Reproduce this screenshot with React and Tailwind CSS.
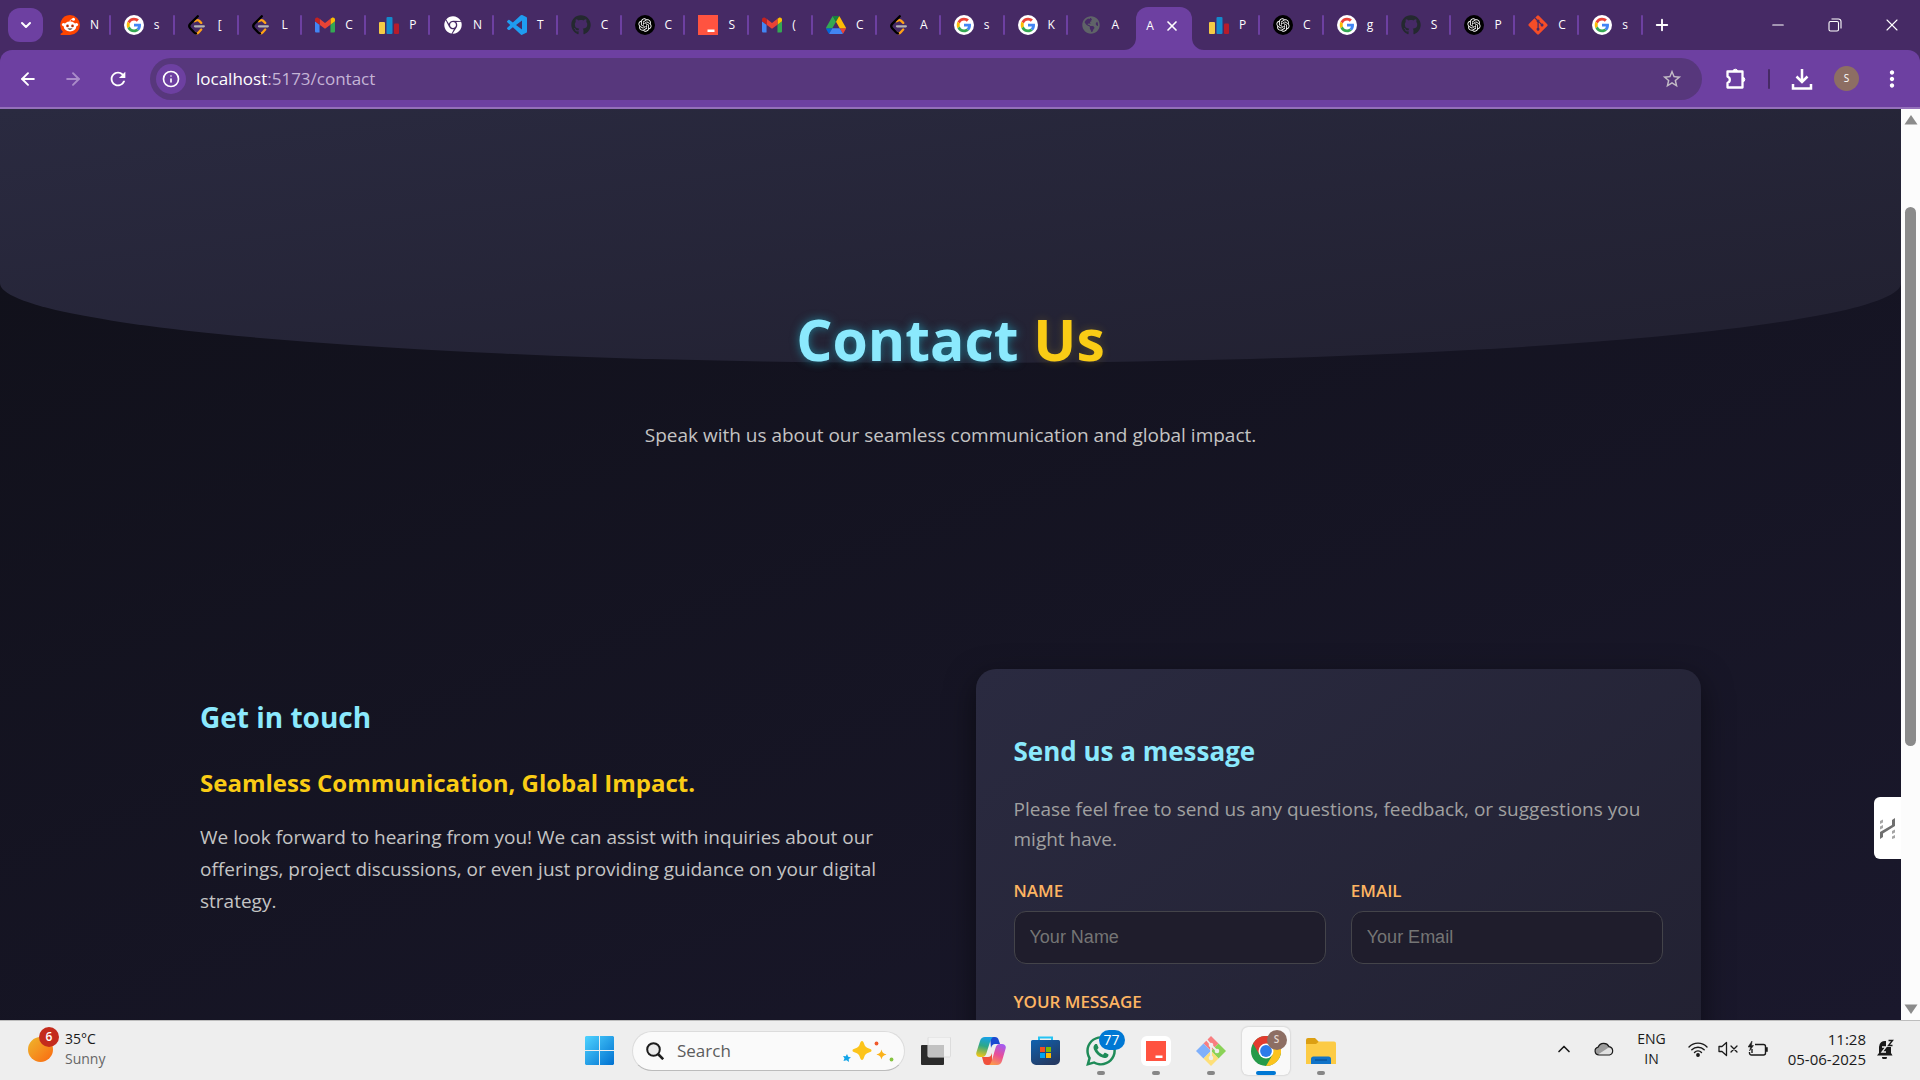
import React from "react";
import {
  ArrowLeft, ArrowRight, ChevronDown, ChevronUp, Info, Minus, Plus, X,
} from "lucide-react";
import { FaGithub, FaGitAlt, FaChrome, FaGlobeAmericas, FaWhatsapp } from "react-icons/fa";
import { RiOpenaiFill } from "react-icons/ri";
import { BiLogoVisualStudio } from "react-icons/bi";
import { MdRefresh, MdStarBorder, MdMoreVert } from "react-icons/md";

/* ---------- favicons ---------- */

function GoogleIcon() {
  return (
    <svg viewBox="0 0 48 48" className="size-5">
      <circle cx="24" cy="24" r="24" fill="#fff" />
      <g transform="translate(6.5 6.5) scale(0.73)">
        <path fill="#EA4335" d="M24 9.5c3.54 0 6.71 1.22 9.21 3.6l6.85-6.85C35.9 2.38 30.47 0 24 0 14.62 0 6.51 5.38 2.56 13.22l7.98 6.19C12.43 13.72 17.74 9.5 24 9.5z" />
        <path fill="#4285F4" d="M46.98 24.55c0-1.57-.15-3.09-.38-4.55H24v9.02h12.94c-.58 2.96-2.26 5.48-4.78 7.18l7.73 6c4.51-4.18 7.09-10.36 7.09-17.65z" />
        <path fill="#FBBC05" d="M10.53 28.59c-.48-1.45-.76-2.99-.76-4.59s.27-3.14.76-4.59l-7.98-6.19C.92 16.46 0 20.12 0 24c0 3.88.92 7.54 2.56 10.78l7.97-6.19z" />
        <path fill="#34A853" d="M24 48c6.48 0 11.93-2.13 15.89-5.81l-7.73-6c-2.15 1.45-4.92 2.3-8.16 2.3-6.26 0-11.57-4.22-13.47-9.91l-7.98 6.19C6.51 42.62 14.62 48 24 48z" />
      </g>
    </svg>
  );
}

function LeetIcon() {
  return (
    <svg viewBox="0 0 20 20" fill="none" strokeLinecap="round" strokeLinejoin="round" strokeWidth="2.3" className="size-5">
      <path stroke="#FFA116" d="M6.500 6.300 8.800 5.200C9.800 4.800 10.500 5.200 11.200 5.900L13.200 7.900M13.200 14.500 10.800 17.200C9.800 18.300 8.500 18.500 7.500 18" />
      <path stroke="#000" d="M9.800 1.200 2.200 8.900C1 10.200 1 11.900 2.200 13.200L6 17.300C6.600 17.900 7.200 18.300 8 18.400" />
      <path stroke="#B3B3B3" d="M7 11.300h8.800" />
    </svg>
  );
}

function GmailIcon() {
  return (
    <svg viewBox="52 38 88 74" className="size-5">
      <path fill="#4285f4" d="M58 108h14V74L52 59v43c0 3.320 2.690 6 6 6" />
      <path fill="#34a853" d="M120 108h14c3.320 0 6-2.690 6-6V59l-20 15" />
      <path fill="#fbbc04" d="M120 48v26l20-15v-8c0-7.420-8.470-11.650-14.400-7.200" />
      <path fill="#ea4335" d="M72 74V48l24 18 24-18v26L96 92" />
      <path fill="#c5221f" d="M52 51v8l20 15V48l-5.600-4.200c-5.940-4.450-14.400-.22-14.400 7.200" />
    </svg>
  );
}

function DriveIcon() {
  return (
    <svg viewBox="0 0 87.3 78" className="size-5">
      <path d="m6.6 66.85 3.85 6.65c.8 1.4 1.95 2.5 3.3 3.3l13.75-23.8h-27.5c0 1.55.4 3.1 1.2 4.5z" fill="#0066da" />
      <path d="m43.65 25-13.75-23.8c-1.35.8-2.5 1.9-3.3 3.3l-25.4 44a9.06 9.06 0 0 0 -1.2 4.5h27.5z" fill="#34a853" />
      <path d="m73.55 76.8c1.35-.8 2.5-1.9 3.3-3.3l1.6-2.75 7.65-13.25c.8-1.4 1.2-2.95 1.2-4.5h-27.502l5.852 11.5z" fill="#ea4335" />
      <path d="m43.65 25 13.75-23.8c-1.35-.8-2.9-1.2-4.5-1.2h-18.5c-1.6 0-3.15.45-4.5 1.2z" fill="#188038" />
      <path d="m59.8 53h-32.3l-13.75 23.8c1.35.8 2.9 1.2 4.5 1.2h50.8c1.6 0 3.15-.45 4.5-1.2z" fill="#4285f4" />
      <path d="m73.4 26.5-12.7-22c-.8-1.4-1.95-2.5-3.3-3.3l-13.75 23.8 16.15 28h27.45c0-1.55-.4-3.1-1.2-4.5z" fill="#fbbc04" />
    </svg>
  );
}

function BarsIcon() {
  return (
    <svg viewBox="0 0 20 20" className="size-5">
      <rect x="0" y="7" width="6" height="12" rx="1" fill="#F5CB45" />
      <rect x="7.500" y="2" width="6" height="17" rx="1" fill="#148ACC" />
      <rect x="15" y="8.500" width="5" height="10.500" rx="1" fill="#B71C2B" />
    </svg>
  );
}

function RedSquareIcon() {
  return (
    <svg viewBox="0 0 20 20" className="size-5">
      <rect width="20" height="20" fill="#FF5340" />
      <rect x="9.500" y="14.500" width="7" height="2.500" fill="#fff" />
    </svg>
  );
}

function RedditIcon() {
  return (
    <svg viewBox="0 0 20 20" className="size-5">
      <path d="M10 0a10 10 0 1 1 0 20H1.200c-.7 0-1-.8-.5-1.200L3 16.900A10 10 0 0 1 10 0z" fill="#FF4500" />
      <circle cx="3.600" cy="9.600" r="1.700" fill="#fff" />
      <circle cx="16.400" cy="9.600" r="1.700" fill="#fff" />
      <ellipse cx="10" cy="11.500" rx="6.300" ry="4.900" fill="#fff" />
      <circle cx="13.500" cy="4.200" r="1.500" fill="#fff" />
      <path d="M10 6.800c0-1.800 1.200-2.600 2.600-2.600" fill="none" stroke="#fff" strokeWidth=".9" />
      <circle cx="7.500" cy="10.900" r="1.300" fill="#B52A00" />
      <circle cx="12.500" cy="10.900" r="1.300" fill="#B52A00" />
      <path d="M7.600 13.600h4.800c-.5 1.500-4.300 1.500-4.800 0z" fill="#222" />
    </svg>
  );
}

function OpenAiIcon() {
  return (
    <span className="flex size-5 items-center justify-center rounded-full bg-black">
      <RiOpenaiFill className="size-4 text-white" />
    </span>
  );
}

const favicons = {
  reddit: <RedditIcon />,
  google: <GoogleIcon />,
  leet: <LeetIcon />,
  gmail: <GmailIcon />,
  bars: <BarsIcon />,
  chrome: <FaChrome className="size-[18px] text-white" />,
  code: <BiLogoVisualStudio className="size-6 shrink-0 text-[#1f9cf0]" />,
  github: <FaGithub className="size-5 text-[#24292f]" />,
  openai: <OpenAiIcon />,
  red: <RedSquareIcon />,
  drive: <DriveIcon />,
  globe: <FaGlobeAmericas className="size-[18px] text-[#5f6368]" />,
  git: <FaGitAlt className="size-[22px] shrink-0 text-[#F64D27]" />,
};

const tabs = [
  ["reddit", "N"], ["google", "s"], ["leet", "["], ["leet", "L"], ["gmail", "C"],
  ["bars", "P"], ["chrome", "N"], ["code", "T"], ["github", "C"], ["openai", "C"],
  ["red", "S"], ["gmail", "("], ["drive", "C"], ["leet", "A"], ["google", "s"],
  ["google", "K"], ["globe", "A"], ["active", "A"], ["bars", "P"], ["openai", "C"],
  ["google", "g"], ["github", "S"], ["openai", "P"], ["git", "C"], ["google", "s"],
];

function ActiveTab({ label }) {
  return (
    <div className="relative min-w-0 self-end">
      <svg viewBox="0 0 12 12" className="absolute bottom-0 -left-2 size-3 text-[#6d40a1]">
        <path d="M12 0v12H0A12 12 0 0 0 12 0z" fill="currentColor" />
      </svg>
      <svg viewBox="0 0 12 12" className="absolute -right-2 bottom-0 size-3 text-[#6d40a1]">
        <path d="M0 0v12h12A12 12 0 0 1 0 0z" fill="currentColor" />
      </svg>
      <div className="mx-1 flex h-[43px] items-center gap-2.5 rounded-t-xl bg-[#6d40a1] pb-1.5 pl-2.5">
        <button>{label}</button>
        <button aria-label="Close tab">
          <X className="size-4" strokeWidth={2.5} />
        </button>
      </div>
    </div>
  );
}

function Tab({ icon, label, divided }) {
  return (
    <button className="relative flex h-10 min-w-0 items-center gap-2.5 pl-[13px]">
      <span className="flex size-5 shrink-0 items-center justify-center">{favicons[icon]}</span>
      <span>{label}</span>
      {divided && <span className="absolute right-0 h-5 w-0.5 rounded bg-[#6d40a1]" />}
    </button>
  );
}

function TabStrip() {
  return (
    <div className="flex h-[50px] shrink-0 items-center bg-[#462a65] text-xs text-white">
      <button aria-label="Search tabs" className="mr-1 ml-2 flex h-[34px] w-[35px] shrink-0 items-center justify-center rounded-xl bg-[#6d40a1]">
        <ChevronDown className="size-4" strokeWidth={3} />
      </button>
      <div className="grid h-full max-w-[1596px] min-w-0 flex-1 grid-cols-[repeat(25,minmax(0,1fr))] items-center">
        {tabs.map(([icon, label], i) =>
          icon === "active" ? (
            <ActiveTab key={i} label={label} />
          ) : (
            <Tab key={i} icon={icon} label={label} divided={i !== 16} />
          )
        )}
      </div>
      <button aria-label="New tab" className="ml-2.5">
        <Plus className="size-[18px]" strokeWidth={2.5} />
      </button>
      <div className="ml-auto flex shrink-0 items-center">
        <button aria-label="Minimize" className="flex w-[57px] justify-center">
          <Minus className="size-[18px]" strokeWidth={1.5} />
        </button>
        <button aria-label="Restore" className="flex w-[57px] justify-center">
          <svg viewBox="0 0 14 14" fill="none" stroke="currentColor" strokeWidth="1.100" className="size-3.5">
            <rect x="1" y="3.500" width="9.500" height="9.500" rx="1.500" />
            <path d="M3.500 1h7a2.500 2.500 0 0 1 2.500 2.500v7" />
          </svg>
        </button>
        <button aria-label="Close window" className="flex w-[57px] justify-center">
          <X className="size-5" strokeWidth={1.3} />
        </button>
      </div>
    </div>
  );
}

function Toolbar() {
  return (
    <div className="shrink-0 bg-[#462a65]">
      <div className="flex h-[59px] items-center rounded-t-xl border-b-2 border-[#9470ba] bg-[#6d40a1] pr-[15px] pl-[5px] text-white">
        <button aria-label="Back" className="flex w-[45px] justify-center">
          <ArrowLeft className="size-5" strokeWidth={2.3} />
        </button>
        <button aria-label="Forward" className="flex w-[45px] justify-center text-[#aa8cc9]">
          <ArrowRight className="size-5" strokeWidth={2.3} />
        </button>
        <button aria-label="Reload" className="flex w-[45px] justify-center">
          <MdRefresh className="size-[22px]" />
        </button>
        <div className="ml-2.5 flex h-[42px] min-w-0 flex-1 items-center rounded-full bg-[#57377c] pl-1.5">
          <button aria-label="View site information" className="flex size-[30px] items-center justify-center rounded-full bg-[#6d40a1]">
            <Info className="size-[18px]" strokeWidth={2.2} />
          </button>
          <a href="#contact" className="ml-2.5 text-[17px] text-[#c5b4d6]">
            <span className="text-white">localhost</span>:5173/contact
          </a>
          <button aria-label="Bookmark" className="mr-[19px] ml-auto text-[#c3bcc6]">
            <MdStarBorder className="size-[22px]" />
          </button>
        </div>
        <button aria-label="Extensions" className="ml-[22px]">
          <svg viewBox="0 0 24 24" fill="none" stroke="currentColor" strokeWidth="2.300" strokeLinejoin="round" className="size-6">
            <path d="M3.500 4.500h15v16h-15v-4.600a3.300 3.300 0 0 0 0-6.300z" />
            <path d="M9 4.500a2.300 2.300 0 0 1 4.600 0zM18.500 10.200a2.300 2.300 0 0 1 0 4.600z" fill="currentColor" strokeWidth="1" />
          </svg>
        </button>
        <span className="mx-5 h-5 w-0.5 rounded bg-[#462a65]" />
        <button aria-label="Downloads">
          <svg viewBox="0 0 24 24" fill="none" stroke="currentColor" strokeWidth="2.500" className="size-6">
            <path d="M12 2v12M6.500 9.500 12 15l5.500-5.500M3 17v4.500h18V17" />
          </svg>
        </button>
        <button aria-label="Profile" className="ml-5 flex size-[25px] items-center justify-center rounded-full bg-[#8d6e63] text-[10px]">
          S
        </button>
        <button aria-label="Menu" className="ml-5">
          <MdMoreVert className="size-[26px]" />
        </button>
      </div>
    </div>
  );
}

/* ---------- page ---------- */

function Field({ id, label, placeholder }) {
  return (
    <div className="min-w-0">
      <label htmlFor={id} className="block text-[17px] leading-6 font-semibold text-[#fdb462] uppercase">{label}</label>
      <input
        id={id}
        placeholder={placeholder}
        className="mt-2 h-[53px] w-full rounded-xl border border-[#44444a] bg-[#1f1d2c] px-[15px] font-['Liberation_Sans',sans-serif] text-lg text-white placeholder:text-[#757575]"
      />
    </div>
  );
}

function ContactPage() {
  return (
    <main id="contact" className="relative min-w-0 flex-1 overflow-hidden bg-linear-160 from-[#101019] to-[#1a182c]">
      <div className="absolute inset-x-0 top-0 h-[254px] rounded-b-[50%_80px] bg-linear-to-br from-[#2a2a40] to-[#212030]" />
      <header className="relative flex flex-col items-center pt-[186px]">
        <h1 className="text-[57px] leading-[88px] font-bold text-[#8be9fd] [text-shadow:0_0_10px_#22b8cf99]">
          Contact <span className="text-[#facc15] [text-shadow:0_0_10px_#facc1533]">Us</span>
        </h1>
        <p className="mt-[36px] text-[19px] leading-8 text-[#c4c4c4]">
          Speak with us about our seamless communication and global impact.
        </p>
      </header>
      <section className="relative mx-auto mt-[218px] grid max-w-[1501px] grid-cols-2 items-start gap-[50px]">
        <div className="min-w-0 pt-[28px]">
          <h2 className="text-[28px] leading-10 font-bold text-[#8be9fd]">Get in touch</h2>
          <h3 className="mt-[30px] text-[24px] leading-8 font-bold text-[#facc15]">Seamless Communication, Global Impact.</h3>
          <p className="mt-[22px] text-[19px] leading-8 text-[#c4c4c4]">
            We look forward to hearing from you! We can assist with inquiries about our offerings, project discussions, or even just providing guidance on your digital strategy.
          </p>
        </div>
        <form className="min-w-0 rounded-[20px] bg-linear-to-br from-[#2a2a40] to-[#212030] p-[38px] shadow-[0_10px_30px_#00000080]" onSubmit={(e) => e.preventDefault()}>
          <h2 className="mt-[24px] text-[26px] leading-10 font-bold text-[#8be9fd]">Send us a message</h2>
          <p className="mt-[23px] text-[19px] leading-[30px] text-[#a0a0a0]">
            Please feel free to send us any questions, feedback, or suggestions you might have.
          </p>
          <div className="mt-[25px] grid grid-cols-2 gap-[25px]">
            <Field id="name" label="Name" placeholder="Your Name" />
            <Field id="email" label="Email" placeholder="Your Email" />
          </div>
          <div className="mt-[26px]">
            <label htmlFor="message" className="block text-[17px] leading-6 font-semibold text-[#fdb462] uppercase">Your message</label>
            <textarea id="message" rows={5} className="mt-2 w-full rounded-xl border border-[#44444a] bg-[#1f1d2c]" />
          </div>
        </form>
      </section>
      <button aria-label="Open assistant" className="absolute right-0 bottom-[161px] flex h-[62px] w-[27px] items-center justify-center rounded-l-md bg-white">
        <svg viewBox="0 0 15 21" className="h-[21px] w-[15px]">
          <path d="M0 21v-7L12 7V2l3-2v8L3 15.500V19z" fill="#6f6f6f" />
          <path d="M0 3l3-1.500v3L0 6zM0 8.500 3 7v3L0 11.500zM12 13l3-1.500v3L12 16zM12 18.500 15 17v3L12 21z" fill="#a5a5a5" />
        </svg>
      </button>
    </main>
  );
}

function Scrollbar() {
  return (
    <div className="flex w-[19px] shrink-0 flex-col items-center bg-[#fcfcfc] py-1.5">
      <svg viewBox="0 0 14 10" className="h-2.5 w-3.5"><path d="M7 0l6.500 9.500H.5z" fill="#8b8b8b" /></svg>
      <div className="mt-[82px] w-[11px] grow-[539] rounded-full bg-[#8b8b8b]" />
      <div className="grow-[258]" />
      <svg viewBox="0 0 14 10" className="h-2.5 w-3.5"><path d="M7 10 .5.500h13z" fill="#8b8b8b" /></svg>
    </div>
  );
}

/* ---------- taskbar ---------- */

function TaskButton({ label, running, active, children }) {
  return (
    <div className="flex w-[55px] justify-center">
      <button
        aria-label={label}
        className={active
          ? "relative flex h-12 w-12 items-center justify-center rounded-md bg-[#f9f9f9] shadow-[0_0_2px_#00000040]"
          : "relative flex h-12 w-12 items-center justify-center"}
      >
        {children}
        {running && !active && <span className="absolute bottom-0 h-1 w-2 rounded-full bg-[#868686]" />}
        {active && <span className="absolute bottom-0 h-1 w-5 rounded-full bg-[#0078d4]" />}
      </button>
    </div>
  );
}

function WindowsIcon() {
  return (
    <svg viewBox="0 0 29 29" className="size-[29px]">
      <defs>
        <linearGradient id="win" x1="0" y1="0" x2="1" y2="1">
          <stop offset="0" stopColor="#4fd3ff" />
          <stop offset="1" stopColor="#0070d0" />
        </linearGradient>
      </defs>
      <path fill="url(#win)" d="M1 0h13v14H0V1zM15 0h13l1 1v13H15zM0 15h14v14H1l-1-1zM15 15h14v13l-1 1H15z" />
    </svg>
  );
}

function SparkIcon() {
  return (
    <svg viewBox="0 0 52 24" className="h-6 w-[52px]">
      <path d="M20 2c1 0 1.500 1 2 2.500 1 3 2 4 5 5 1.500.5 2.500 1 2.500 2s-1 1.500-2.500 2c-3 1-4 2-5 5-.5 1.500-1 2.500-2 2.500s-1.500-1-2-2.500c-1-3-2-4-5-5-1.500-.5-2.500-1-2.500-2s1-1.500 2.500-2c3-1 4-2 5-5 .5-1.500 1-2.500 2-2.500z" fill="#fcc41b" />
      <path d="M39.500 10.500c.8 3 1.800 4 5 5-3.200 1-4.200 2-5 5-.8-3-1.800-4-5-5 3.200-1 4.200-2 5-5z" fill="#fbb21b" />
      <path d="M5 15l1.200 2.800 2.800.7-2.300 1.500.3 3-2.500-1.700L1.500 22l1-2.800L1 17l2.800.3z" fill="#12a4e8" />
      <circle cx="34.500" cy="4.500" r="1.900" fill="#f0592b" />
      <circle cx="49.500" cy="20.500" r="1.900" fill="#86c440" />
    </svg>
  );
}

function TaskViewIcon() {
  return (
    <svg viewBox="0 0 30 28" className="h-7 w-[30px]">
      <rect x="0" y="8" width="23" height="20" rx="1" fill="#2b2b2b" />
      <rect x="7" y="0" width="22.500" height="20" rx="1" fill="#f3f3f3" stroke="#dcdcdc" />
      <path d="M7 8h16v12H7z" fill="#c2c2c2" />
    </svg>
  );
}

function CopilotIcon() {
  return (
    <svg viewBox="0 0 30 28" className="h-7 w-[30px]">
      <defs>
        <linearGradient id="cpA" x1=".5" y1="0" x2=".3" y2="1">
          <stop offset="0" stopColor="#17a1e6" />
          <stop offset=".45" stopColor="#2ea887" />
          <stop offset="1" stopColor="#f3c614" />
        </linearGradient>
        <linearGradient id="cpB" x1=".7" y1="0" x2=".3" y2="1">
          <stop offset="0" stopColor="#a45bf0" />
          <stop offset=".5" stopColor="#ea4e96" />
          <stop offset="1" stopColor="#fb9a4b" />
        </linearGradient>
      </defs>
      <path d="M14 0h5c2 0 3 1 3.500 2.500L24 7h-5c-2 0-3 1-4 4z" fill="#1b49d1" />
      <path d="M16 28h-5c-2 0-3-1-3.500-2.500L6 20h6c2 0 3-1 4-4z" fill="#f0503c" />
      <path d="M9 0h9c-2 0-3 2-4 5l-3.500 11c-.8 2.500-2 4-4.500 4H4c-3 0-4.500-2-3.500-5L4 4c.8-2.500 2.500-4 5-4z" fill="url(#cpA)" />
      <path d="M21 28h-9c2 0 3-2 4-5l3.500-12c.8-2.500 2-4 4.500-4h2c3 0 4.500 2 3.500 5L26 24c-.8 2.500-2.500 4-5 4z" fill="url(#cpB)" />
    </svg>
  );
}

function StoreIcon() {
  return (
    <svg viewBox="0 0 29 29" className="size-[29px]">
      <defs>
        <linearGradient id="store" x1="0" y1="0" x2=".6" y2="1">
          <stop offset="0" stopColor="#0f62b0" />
          <stop offset="1" stopColor="#243a63" />
        </linearGradient>
      </defs>
      <path d="M8 5V1.500h13V5" fill="none" stroke="#25c3f3" strokeWidth="2" />
      <path d="M0 5.500A1.500 1.500 0 0 1 1.500 4h26A1.500 1.500 0 0 1 29 5.500V24a5 5 0 0 1-5 5H5a5 5 0 0 1-5-5z" fill="url(#store)" />
      <path d="M9 11h5v5H9z" fill="#f25022" />
      <path d="M15 11h5v5h-5z" fill="#7fba00" />
      <path d="M9 17h5v5H9z" fill="#00a4ef" />
      <path d="M15 17h5v5h-5z" fill="#ffb900" />
    </svg>
  );
}

function GitColorIcon() {
  return (
    <svg viewBox="0 0 30 30" className="size-[30px]">
      <path d="M15 0l7.500 7.500L15 15 7.500 7.500z" fill="#f87e80" />
      <path d="M7.500 7.500 15 15l-7.500 7.500L0 15z" fill="#7fb0fb" />
      <path d="M22.500 7.500 30 15l-7.500 7.500L15 15z" fill="#8ad257" />
      <path d="M15 15l7.500 7.500L15 30l-7.500-7.500z" fill="#fddf79" />
      <path d="M10 3l5 6v13M15 9l6 6" fill="none" stroke="#eee" strokeWidth="1.800" />
      <circle cx="15" cy="9" r="2.300" fill="#eee" />
      <circle cx="21" cy="15" r="2.300" fill="#eee" />
      <circle cx="15" cy="22" r="2.300" fill="#eee" />
    </svg>
  );
}

function ChromeColorIcon() {
  return (
    <svg viewBox="0 0 30 30" className="size-[30px]">
      <circle cx="15" cy="15" r="15" fill="#269a49" />
      <path d="M15 30A15 15 0 0 0 28 7.500H15l6.500 11.300z" fill="#fcc31e" />
      <path d="M2 7.500A15 15 0 0 1 28 7.500H15L8.500 18.700z" fill="#e33b2e" />
      <circle cx="15" cy="15" r="7.500" fill="#fff" />
      <circle cx="15" cy="15" r="5.900" fill="#2d7bea" />
    </svg>
  );
}

function FolderIcon() {
  return (
    <svg viewBox="0 0 30 26" className="h-[26px] w-[30px]">
      <path d="M0 2a2 2 0 0 1 2-2h7l4 4v4H0z" fill="#dc9f12" />
      <path d="M0 6h10l3-2.500h15a2 2 0 0 1 2 2V26H0z" fill="#fccb45" />
      <path d="M5 26v-5a2.500 2.500 0 0 1 2.500-2.500h15A2.500 2.500 0 0 1 25 21v5z" fill="#1073c8" />
      <path d="M9 22h12" stroke="#0b4f92" strokeWidth="1.200" />
    </svg>
  );
}

function Taskbar() {
  return (
    <footer className="grid h-[60px] shrink-0 grid-cols-[1fr_auto_1fr] items-center border-t border-[#bdbdbd] bg-[#eeeeee] text-[#1a1a1a]">
      <button className="flex items-center justify-self-start pb-[3px] pl-7 text-left text-sm leading-5">
        <span className="relative mr-3 size-[25px] rounded-full bg-linear-to-br from-[#ecb62c] to-[#f9650f]">
          <span className="absolute -top-2.5 left-[11px] flex size-5 items-center justify-center rounded-full bg-[#c42b1c] text-xs font-semibold text-white">6</span>
        </span>
        <span>
          <span className="block">35°C</span>
          <span className="block text-[#666]">Sunny</span>
        </span>
      </button>
      <div className="flex items-center">
        <TaskButton label="Start"><WindowsIcon /></TaskButton>
        <div className="mr-[3px] ml-[5px] flex h-10 w-[273px] items-center rounded-full border border-[#dcdcdc] border-b-[#bcbcbc] bg-[#fafafa] pr-2.5 pl-[13px]">
          <svg viewBox="0 0 18 18" fill="none" stroke="#1d1d1d" strokeWidth="2" className="size-[18px] shrink-0">
            <circle cx="7.500" cy="7.500" r="6.300" fill="#ececec" />
            <path d="M12 12l5.200 5.200" strokeWidth="2.600" />
          </svg>
          <input aria-label="Search" placeholder="Search" className="ml-[13px] min-w-0 flex-1 bg-transparent text-[17px] placeholder:text-[#5c5c5c]" />
          <SparkIcon />
        </div>
        <TaskButton label="Task view"><TaskViewIcon /></TaskButton>
        <TaskButton label="Copilot"><CopilotIcon /></TaskButton>
        <TaskButton label="Microsoft Store"><StoreIcon /></TaskButton>
        <TaskButton label="WhatsApp" running>
          <FaWhatsapp className="size-[34px] shrink-0 text-[#1f8b58]" />
          <span className="absolute top-[3px] left-[22px] flex h-5 w-[26px] items-center justify-center rounded-full bg-[#0078d4] text-sm text-white">77</span>
        </TaskButton>
        <TaskButton label="Recorder" running>
          <span className="flex size-[30px] items-center justify-center rounded-md bg-white">
            <RedSquareIcon />
          </span>
        </TaskButton>
        <TaskButton label="Git" running><GitColorIcon /></TaskButton>
        <TaskButton label="Chrome" running active>
          <ChromeColorIcon />
          <span className="absolute top-[3px] left-[25px] flex size-5 items-center justify-center rounded-full bg-[#8d6e63] text-[10px] font-semibold text-[#e4d8d2]">S</span>
        </TaskButton>
        <TaskButton label="File Explorer" running><FolderIcon /></TaskButton>
      </div>
      <div className="flex items-center justify-self-end pr-[26px] pb-[3px] text-[15px] leading-5">
        <button aria-label="Show hidden icons"><ChevronUp className="size-5" strokeWidth={2} /></button>
        <button aria-label="OneDrive" className="ml-5">
          <svg viewBox="0 0 20 14" className="h-3.5 w-5">
            <path d="M5 13a4 4 0 0 1-.8-7.900A6 6 0 0 1 15 4.600 4.300 4.300 0 0 1 15.500 13z" fill="#9c9c9c" />
            <path d="M4 12.500 15.500 5l3.500 4-3 4H5z" fill="#e1e1e1" />
            <path d="M5 13a4 4 0 0 1-.8-7.900A6 6 0 0 1 15 4.600 4.300 4.300 0 0 1 15.500 13z" fill="none" stroke="#1a1a1a" strokeWidth="1.200" />
          </svg>
        </button>
        <button className="ml-[23px] text-center text-sm leading-5"><span className="block">ENG</span><span className="block">IN</span></button>
        <button aria-label="Network, sound and battery" className="ml-[22px] flex items-center gap-2.5">
          <svg viewBox="0 0 20 16" fill="none" stroke="currentColor" strokeWidth="1.400" strokeLinecap="round" className="h-4 w-5">
            <path d="M1 6a12.500 12.500 0 0 1 18 0M3.800 8.800a8.700 8.700 0 0 1 12.400 0M6.500 11.400a5 5 0 0 1 7 0" />
            <circle cx="10" cy="14" r="1.200" fill="currentColor" />
          </svg>
          <svg viewBox="0 0 20 16" fill="none" stroke="currentColor" strokeWidth="1.300" strokeLinecap="round" strokeLinejoin="round" className="h-4 w-5">
            <path d="M1 5.500v5h3l4.500 4v-13L4 5.500zM13 5l6 6M19 5l-6 6" />
          </svg>
          <svg viewBox="0 0 20 16" fill="none" stroke="currentColor" strokeWidth="1.400" className="h-4 w-5">
            <path d="M7 3.500h8.500a2 2 0 0 1 2 2v6.500a2 2 0 0 1-2 2h-12a2 2 0 0 1-2-2v-1" />
            <path d="M18 6.500h1.500v4H18zM4 0 0 6h2.500L1.500 10l4-5.500H3.500z" fill="currentColor" strokeWidth=".5" />
            <path d="M4 8v4" />
          </svg>
        </button>
        <button className="ml-5 text-right"><span className="block">11:28</span><span className="block">05-06-2025</span></button>
        <button aria-label="Notifications" className="ml-2.5">
          <svg viewBox="0 0 18 20" className="h-5 w-[18px]">
            <path d="M3 14V8a6 6 0 0 1 7-6v6h5v6l1.500 2.500H1z" fill="#1a1a1a" />
            <path d="M6 18h5a2.500 2.500 0 0 1-5 0z" fill="#1a1a1a" />
            <path d="M6 8h4l-4 5h4" fill="none" stroke="#eee" strokeWidth="1.300" />
            <path d="M12.500 1.500h4l-4 5h4" fill="none" stroke="#1a1a1a" strokeWidth="1.400" />
          </svg>
        </button>
      </div>
    </footer>
  );
}

export default function App() {
  return (
    <div className="flex h-screen flex-col overflow-hidden font-['Open_Sans',sans-serif]">
      <TabStrip />
      <Toolbar />
      <div className="flex min-h-0 flex-1">
        <ContactPage />
        <Scrollbar />
      </div>
      <Taskbar />
    </div>
  );
}
